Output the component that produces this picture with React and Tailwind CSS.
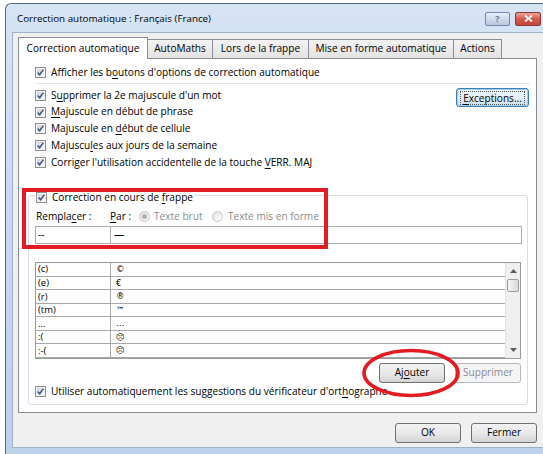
import React from "react";

const ui = "font-['Open_Sans','Noto_Sans',sans-serif]";

// Mnemonic letter (access key) underline
const U = ({ children }) => (
  <span className="underline decoration-[1px] underline-offset-[2px]">{children}</span>
);

function Check() {
  return (
    <span className="flex h-[11px] w-[11px] shrink-0 border border-[#8e8f8f] bg-[#f6f6f6] p-px">
      <span className="flex flex-1 items-center justify-center bg-gradient-to-br from-[#cdd4dc] to-[#f9fafb]">
        <svg viewBox="0 0 7 7" className="h-[7px] w-[7px] overflow-visible">
          <path d="M0.6 3.6 L2.6 5.8 L6.4 0.6" fill="none" stroke="#3d5286" strokeWidth="1.5" />
        </svg>
      </span>
    </span>
  );
}

function Radio({ on }) {
  return (
    <span className="flex h-[11px] w-[11px] shrink-0 items-center justify-center rounded-full border border-[#c6c6c6] bg-gradient-to-br from-[#e4e4e4] to-[#fbfbfb]">
      {on && <span className="h-[5px] w-[5px] rounded-full bg-[#b0b0b0]" />}
    </span>
  );
}

function CheckRow({ children, className = "" }) {
  return (
    <div className={`flex items-center gap-[5px] ${className}`}>
      <Check />
      <span className="whitespace-nowrap">{children}</span>
    </div>
  );
}

function Btn({ children, className = "", disabled = false }) {
  return (
    <div
      className={`flex items-center justify-center rounded-[3px] border ${
        disabled
          ? "border-[#b5b9bc] bg-[#f4f4f4] text-[#8a8a8a]"
          : "border-[#707070] bg-gradient-to-b from-[#f3f3f3] via-[#e9e9e9] to-[#d4d4d4] text-black"
      } ${className}`}
    >
      {children}
    </div>
  );
}

function Arrow({ up }) {
  return (
    <svg viewBox="0 0 7 4" className="h-[4px] w-[7px]">
      <path d={up ? "M0 4 L3.5 0 L7 4 Z" : "M0 0 L3.5 4 L7 0 Z"} fill="#5a5a5a" />
    </svg>
  );
}

const entries = [
  ["(c)", "©"],
  ["(e)", "€"],
  ["(r)", "®"],
  ["(tm)", "™"],
  ["...", "…"],
  [":(", "☹"],
  [":-(", "☹"],
];

export default function App() {
  return (
    <div className={`relative h-[454px] w-[543px] overflow-hidden bg-white pl-[5px] pt-[3px] text-[10.1px] text-black ${ui}`}>
      {/* Window frame */}
      <div className="flex h-[451px] w-[538px] flex-col rounded-tl-[6px] border-l border-t border-[#58677c] bg-gradient-to-b from-[#d6e4f5] via-[#c6d9ef] to-[#bcd1ea] pb-[6px] pl-[6px]">
        {/* Title bar */}
        <div className="flex h-[28px] items-center pr-[2px]">
          <div className="flex-1 pl-[5px] pt-[2px] text-[9.8px] text-black">
            Correction automatique : Français (France)
          </div>
          <div className="flex items-center gap-[5px] pt-[1px]">
            <div className="flex h-[14px] w-[25px] items-center justify-center rounded-[2px] border border-[#7389a8] bg-gradient-to-b from-[#e7eef8] to-[#b6c8e0] text-[9px] font-bold leading-none text-[#6d7d94]">
              ?
            </div>
            <div className="flex h-[14px] w-[26px] items-center justify-center rounded-[2px] border border-[#8a3a36] bg-gradient-to-b from-[#e9a494] via-[#d4584a] to-[#c4463c]">
              <svg viewBox="0 0 9 7" className="h-[7px] w-[9px]">
                <path d="M1 0.5 L8 6.5 M8 0.5 L1 6.5" stroke="#ffffff" strokeWidth="1.8" />
              </svg>
            </div>
          </div>
        </div>

        {/* Client area */}
        <div className="flex flex-1 flex-col border-b border-l border-t border-[#9fb1c8] bg-[#f0f0f0] pl-[5px] pr-[6px] pt-[4px]">
          {/* Tab strip */}
          <div className="flex h-[21px] items-end">
            <div className="relative z-10 -mb-px flex h-[22px] w-[130px] items-center justify-center border border-b-0 border-[#898c95] bg-white">
              Correction automatique
            </div>
            <div className="flex h-[19px] w-[65px] items-center justify-center border-r border-t border-[#898c95] bg-gradient-to-b from-[#f3f3f3] to-[#e3e3e3]">
              AutoMaths
            </div>
            <div className="flex h-[19px] w-[96px] items-center justify-center border-r border-t border-[#898c95] bg-gradient-to-b from-[#f3f3f3] to-[#e3e3e3]">
              Lors de la frappe
            </div>
            <div className="flex h-[19px] w-[145px] items-center justify-center border-r border-t border-[#898c95] bg-gradient-to-b from-[#f3f3f3] to-[#e3e3e3]">
              Mise en forme automatique
            </div>
            <div className="flex h-[19px] w-[48px] items-center justify-center border-r border-t border-[#898c95] bg-gradient-to-b from-[#f3f3f3] to-[#e3e3e3]">
              Actions
            </div>
          </div>

          {/* Tab page */}
          <div className="flex h-[355px] flex-col border border-[#898c95] bg-white pt-[5px]">
            <CheckRow className="ml-[16px] h-[17px]">
              Afficher les b<U>o</U>utons d'options de correction automatique
            </CheckRow>
            <div className="ml-[16px] mr-[6px] mt-[2px] h-px bg-[#e2e8ee]" />

            <div className="mt-[3px] flex justify-between">
              <div className="ml-[16px] flex flex-col">
                <CheckRow className="h-[16.7px]">
                  S<U>u</U>pprimer la 2e majuscule d'un mot
                </CheckRow>
                <CheckRow className="h-[16.7px]">
                  <U>M</U>ajuscule en début de phrase
                </CheckRow>
                <CheckRow className="h-[16.7px]">
                  Majuscule en <U>d</U>ébut de cellule
                </CheckRow>
                <CheckRow className="h-[16.7px]">
                  Majuscu<U>l</U>es aux jours de la semaine
                </CheckRow>
                <CheckRow className="h-[16.7px]">
                  Corriger l'utilisation accidentelle de la touche <U>V</U>ERR. MAJ
                </CheckRow>
              </div>
              <div className="mr-[7px] mt-[1px] flex h-[19px] w-[73px] items-center justify-center rounded-[3px] border border-[#3c7fb1] bg-gradient-to-b from-[#f2f8fc] via-[#e3eff8] to-[#c8dff0] shadow-[inset_0_0_0_1px_#9fd0f0]">
                <span className="border border-dotted border-[#555] px-[2px] leading-[12px]">
                  <U>E</U>xceptions...
                </span>
              </div>
            </div>

            {/* Group box */}
            <fieldset className="ml-[9px] mr-[8px] mt-[15.5px] rounded-[3px] border border-[#d5dfe5] pb-[4px] pl-[6px] pr-[5px]">
              <legend className="px-[1px] pt-[4px]">
                <CheckRow className="h-[16px] pr-[1px]">
                  Correction en cours de <U>f</U>rappe
                </CheckRow>
              </legend>

              <div className="mt-[4px] flex h-[14px] items-center">
                <span className="w-[75px] pl-[1px]">
                  Rempla<U>c</U>er :
                </span>
                <span className="w-[29px]">
                  <U>P</U>ar :
                </span>
                <span className="flex items-center gap-[4px] text-[#8d8d8d]">
                  <Radio on />
                  <span className="w-[54px]">Texte brut</span>
                  <Radio />
                  <span className="ml-[1px]">Texte mis en forme</span>
                </span>
              </div>

              <div className="mt-[2px] flex h-[18px]">
                <div className="flex w-[76px] items-center border border-[#abadb3] pl-[2px]">--</div>
                <div className="flex flex-1 items-center border border-l-0 border-[#abadb3] pl-[3px]">—</div>
              </div>

              {/* Replacement list */}
              <div className="mt-[18px] flex h-[97px] w-[486px] border border-[#9a9a9a]">
                <div className="flex flex-1 flex-col">
                  {entries.map(([from, to]) => (
                    <div key={from} className="flex h-[13.57px] border-b border-[#a8a8a8] text-[9.5px] leading-none">
                      <div className="flex w-[75px] items-center border-r border-[#a8a8a8] pl-[2px]">{from}</div>
                      <div className="flex items-center pl-[5px] font-['DejaVu_Sans',sans-serif] text-[8.5px]">{to}</div>
                    </div>
                  ))}
                </div>
                <div className="flex w-[15px] flex-col border-l border-[#e3e3e3] bg-[#f0f0f0]">
                  <div className="flex h-[16px] items-center justify-center">
                    <Arrow up />
                  </div>
                  <div className="mx-[1px] h-[13px] rounded-[2px] border border-[#9c9c9c] bg-gradient-to-r from-[#f4f4f4] to-[#d9d9d9]" />
                  <div className="flex-1" />
                  <div className="flex h-[16px] items-center justify-center">
                    <Arrow />
                  </div>
                </div>
              </div>

              <div className="mt-[4px] flex justify-end gap-[10px] pr-[1px]">
                <Btn className="h-[20px] w-[66px]">
                  Aj<U>o</U>uter
                </Btn>
                <Btn disabled className="h-[20px] w-[66px]">
                  Supprimer
                </Btn>
              </div>

              <CheckRow className="mt-[1px] h-[16px]">
                Utiliser automatiquement les suggestions du vérificateur d'ort<U>h</U>ographe
              </CheckRow>
            </fieldset>
          </div>

          {/* Dialog buttons */}
          <div className="mt-[10px] flex justify-end gap-[10px]">
            <Btn className="h-[20px] w-[66px]">OK</Btn>
            <Btn className="h-[20px] w-[66px]">Fermer</Btn>
          </div>
        </div>
      </div>

      {/* Red annotations */}
      <div className="pointer-events-none absolute left-[22px] top-[188px] h-[61px] w-[306px] border-[4px] border-[#e31b23]" />
      <svg className="pointer-events-none absolute left-[360px] top-[347px] h-[52px] w-[102px]" viewBox="0 0 102 52">
        <ellipse cx="51" cy="26" rx="47" ry="22.5" fill="none" stroke="#e31b23" strokeWidth="3.6" />
      </svg>
    </div>
  );
}
